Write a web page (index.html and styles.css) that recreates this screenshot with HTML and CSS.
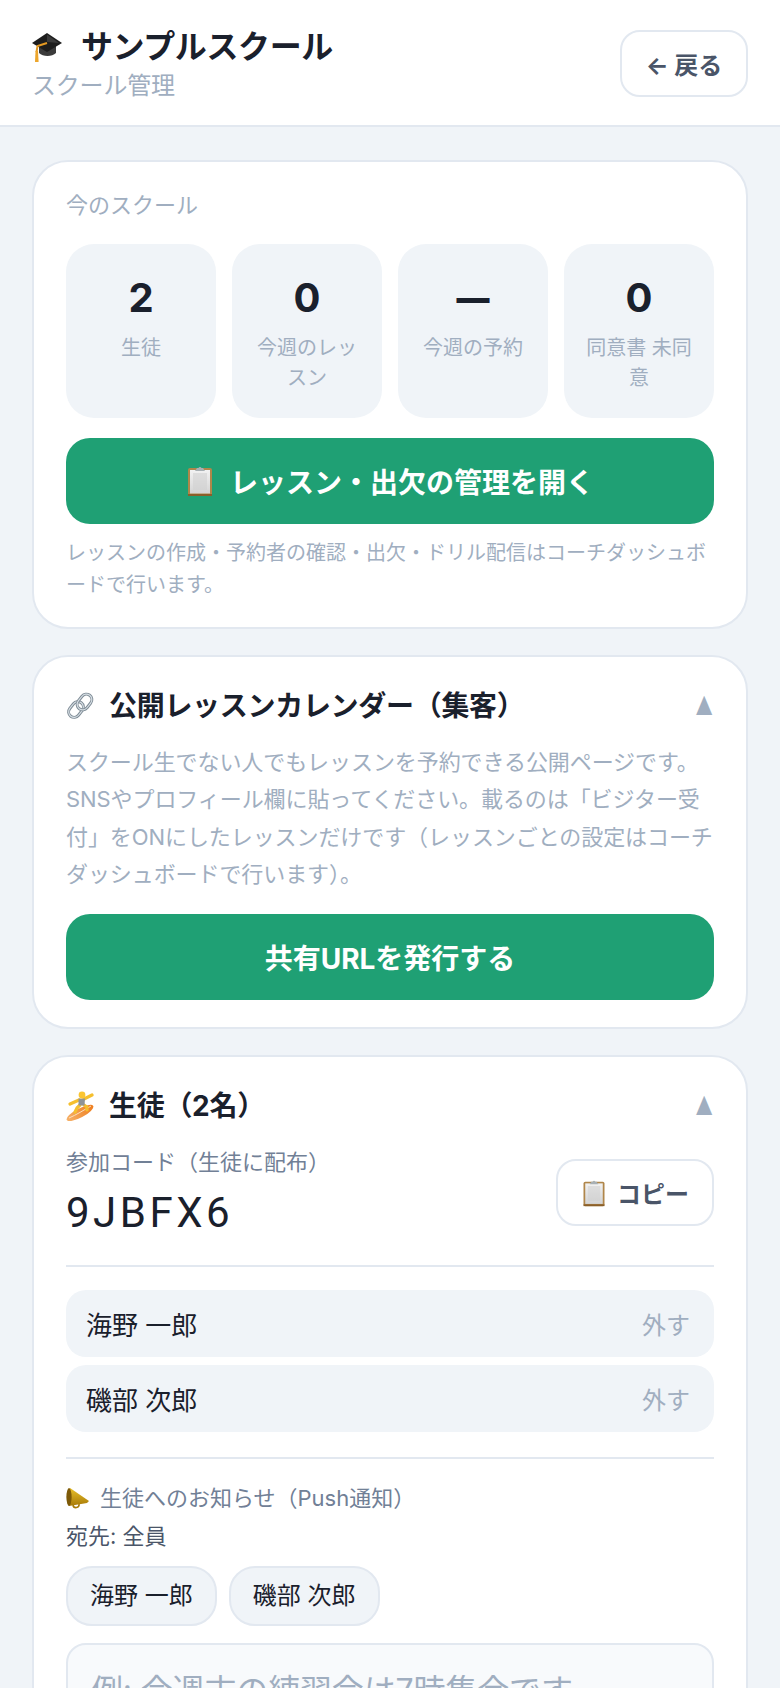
FILE: index.html
```html
<!DOCTYPE html>
<html lang="ja">
<head>
<meta charset="UTF-8">
<meta name="viewport" content="width=device-width, initial-scale=1.0">
<title>サンプルスクール</title>
<link rel="stylesheet" href="styles.css">
</head>
<body>

<svg class="defs" width="0" height="0" aria-hidden="true">
  <defs>
    <linearGradient id="paperGrad" x1="0" y1="0" x2="0" y2="1">
      <stop offset="0" stop-color="#f2f2f2"/>
      <stop offset="1" stop-color="#d4d4d4"/>
    </linearGradient>
    <linearGradient id="goldGrad" x1="0" y1="0" x2="0" y2="1">
      <stop offset="0" stop-color="#e8c02a"/>
      <stop offset="1" stop-color="#a87a08"/>
    </linearGradient>
    <linearGradient id="boardGrad" x1="0" y1="0" x2="1" y2="0">
      <stop offset="0" stop-color="#f6b26a"/>
      <stop offset="1" stop-color="#ee7d1e"/>
    </linearGradient>
    <symbol id="iconClipboard" viewBox="0 0 28 32">
      <rect x="2" y="3" width="24" height="28" rx="2" fill="#b0864a"/>
      <rect x="2" y="29" width="24" height="2" fill="#8a5f2a"/>
      <rect x="4" y="5" width="20" height="23.5" fill="url(#paperGrad)"/>
      <rect x="7" y="8" width="14" height="17" fill="#cfcfcf" opacity=".55"/>
      <path d="M9 6 L11 3 H12.5 A1.6 1.6 0 0 1 15.5 3 H17 L19 6 Z" fill="#a8b0b4"/>
    </symbol>
  </defs>
</svg>

<header class="topbar">
  <div class="topbar-left">
    <h1 class="school-name">
      <svg class="icon-cap" viewBox="0 0 30 30" aria-hidden="true">
        <path d="M7 12 V21 C11 25 20 25 24 21 V12 Z" fill="#3b3b3b"/>
        <path d="M15 1 L30 11 L15 20 L0 11 Z" fill="#1d1d1d"/>
        <path d="M15 2.5 L27 11 L15 10 Z" fill="#3a3a3a"/>
        <path d="M15 11 L5.5 14 L4.5 20" fill="none" stroke="#e59a22" stroke-width="2"/>
        <path d="M3.5 19 H6 L6.6 30 H3 Z" fill="#eda62c"/>
      </svg>
      サンプルスクール
    </h1>
    <p class="school-sub">スクール管理</p>
  </div>
  <button type="button" class="btn-outline btn-back">← 戻る</button>
</header>

<main class="page">

  <section class="card">
    <p class="card-label">今のスクール</p>
    <div class="stats">
      <div class="stat"><div class="stat-num">2</div><div class="stat-label">生徒</div></div>
      <div class="stat"><div class="stat-num">0</div><div class="stat-label">今週のレッスン</div></div>
      <div class="stat"><div class="stat-num stat-dash">—</div><div class="stat-label">今週の予約</div></div>
      <div class="stat"><div class="stat-num">0</div><div class="stat-label">同意書 未同意</div></div>
    </div>
    <button type="button" class="btn-green">
      <svg class="icon-clip-lg"><use href="#iconClipboard"/></svg>
      レッスン・出欠の管理を開く
    </button>
    <p class="note">レッスンの作成・予約者の確認・出欠・ドリル配信はコーチダッシュボードで行います。</p>
  </section>

  <section class="card">
    <div class="section-head">
      <h2 class="section-title">
        <svg class="icon-head" viewBox="0 0 28 28" aria-hidden="true">
          <g fill="none" stroke-linecap="round">
            <rect x="1.5" y="12" width="17" height="11" rx="5.5" transform="rotate(-52 10 17.5)" stroke="#7d8a94" stroke-width="3"/>
            <rect x="1.5" y="12" width="17" height="11" rx="5.5" transform="rotate(-52 10 17.5)" stroke="#d7dfe5" stroke-width="1.2"/>
            <rect x="10" y="4.5" width="17" height="11" rx="5.5" transform="rotate(-52 18.5 10)" stroke="#7d8a94" stroke-width="3"/>
            <rect x="10" y="4.5" width="17" height="11" rx="5.5" transform="rotate(-52 18.5 10)" stroke="#d7dfe5" stroke-width="1.2"/>
          </g>
        </svg>
        公開レッスンカレンダー（集客）
      </h2>
      <span class="caret">▲</span>
    </div>
    <p class="desc">スクール生でない人でもレッスンを予約できる公開ページです。SNSやプロフィール欄に貼ってください。載るのは「ビジター受付」をONにしたレッスンだけです（レッスンごとの設定はコーチダッシュボードで行います）。</p>
    <button type="button" class="btn-green">共有URLを発行する</button>
  </section>

  <section class="card">
    <div class="section-head">
      <h2 class="section-title">
        <svg class="icon-head icon-surfer" viewBox="0 0 28 30" aria-hidden="true">
          <ellipse cx="14" cy="22" rx="15" ry="4.6" transform="rotate(-28 14 22)" fill="url(#boardGrad)"/>
          <path d="M3 27 C10 24 18 19 25 15" fill="none" stroke="#fbe0bd" stroke-width="1"/>
          <g fill="none" stroke="#f5bf2e" stroke-width="3.2" stroke-linecap="round" stroke-linejoin="round">
            <path d="M13 9 L4 13"/>
            <path d="M18 8 L26 4"/>
            <path d="M14 14 L11 17 L9 21"/>
            <path d="M18 14 L21 16 L21 19"/>
          </g>
          <path d="M12.5 7.5 H19 L18.5 14.5 H12.5 Z" fill="#8f9497"/>
          <circle cx="16" cy="4" r="3.4" fill="#fbc531"/>
        </svg>
        生徒（2名）
      </h2>
      <span class="caret">▲</span>
    </div>

    <div class="code-row">
      <div>
        <div class="code-label">参加コード（生徒に配布）</div>
        <div class="code-value">9JBFX6</div>
      </div>
      <button type="button" class="btn-outline btn-copy">
        <svg class="icon-clip-sm"><use href="#iconClipboard"/></svg>
        コピー
      </button>
    </div>

    <hr class="rule">

    <ul class="students">
      <li class="student"><span>海野 一郎</span><span class="remove">外す</span></li>
      <li class="student"><span>磯部 次郎</span><span class="remove">外す</span></li>
    </ul>

    <hr class="rule rule-low">

    <div class="notice-title">
      <svg class="icon-horn" viewBox="0 0 24 24" aria-hidden="true">
        <path d="M4 2 L23 15 L21 17 L3 20 C0 14 0 6 4 2 Z" fill="url(#goldGrad)"/>
        <ellipse cx="3" cy="11" rx="2.6" ry="9" fill="#7d5a08"/>
        <path d="M7 19 A3 3 0 0 0 13 18" fill="none" stroke="#a87a08" stroke-width="1.6"/>
      </svg>
      生徒へのお知らせ（Push通知）
    </div>
    <div class="notice-to">宛先: 全員</div>
    <div class="chips">
      <span class="chip">海野 一郎</span>
      <span class="chip">磯部 次郎</span>
    </div>
    <textarea class="notice-input" rows="4" placeholder="例: 今週末の練習会は7時集合です"></textarea>
  </section>

</main>
</body>
</html>
```

FILE: styles.css
```css
html, body {
  height: 100%;
  overflow: hidden;
}

body {
  margin: 0;
  font-family: Inter, "Noto Sans CJK JP", sans-serif;
  background-color: #f0f4f8;
  color: #1a202c;
}

.defs {
  position: absolute;
}

h1, h2, p, ul {
  margin: 0;
  padding: 0;
}

/* header */
.topbar {
  display: flex;
  justify-content: space-between;
  align-items: center;
  height: 125px;
  padding: 0 32px;
  background-color: #fff;
  border-bottom: 2px solid #e2e8f0;
}

.topbar-left {
  padding-top: 5px;
}

.school-name {
  display: flex;
  align-items: center;
  gap: 19px;
  font-size: 32px;
  line-height: 40px;
  font-weight: 700;
  letter-spacing: -0.4px;
}

.icon-cap {
  width: 30px;
  height: 30px;
}

.school-sub {
  margin-top: 1px;
  font-size: 24px;
  line-height: 36px;
  color: #a0aec0;
  letter-spacing: -0.2px;
}

.btn-outline {
  display: flex;
  align-items: center;
  justify-content: center;
  height: 67px;
  background-color: #fff;
  border: 2px solid #e2e8f0;
  border-radius: 20px;
  color: #4a5568;
  font-family: inherit;
  font-size: 24px;
  font-weight: 700;
}

.btn-back {
  width: 128px;
  margin-top: 2px;
}

/* cards */
.page {
  display: flex;
  flex-direction: column;
  gap: 26px;
  padding: 33px 32px 32px;
}

.card {
  padding: 28px 32px 26px;
  background-color: #fff;
  border: 2px solid #e2e8f0;
  border-radius: 36px;
}

.card-label {
  margin-top: -1px;
  font-size: 22px;
  line-height: 33px;
  color: #a0aec0;
}

.stats {
  display: grid;
  grid-template-columns: repeat(4, 1fr);
  gap: 16px;
  margin-top: 22px;
}

.stat {
  height: 174px;
  box-sizing: border-box;
  padding: 24px 16px;
  background-color: #f0f4f8;
  border-radius: 28px;
  text-align: center;
}

.stat-num {
  font-size: 40px;
  line-height: 60px;
  font-weight: 700;
}

.stat-dash {
  font-size: 33px;
  font-weight: 900;
}

.stat-label {
  margin-top: 5px;
  font-size: 20px;
  line-height: 30px;
  color: #a0aec0;
}

.btn-green {
  display: flex;
  align-items: center;
  justify-content: center;
  gap: 16px;
  width: 100%;
  height: 86px;
  margin-top: 20px;
  background-color: #1fa074;
  border: none;
  border-radius: 24px;
  color: #fff;
  font-family: inherit;
  font-size: 28px;
  font-weight: 700;
}

.icon-clip-lg {
  width: 28px;
  height: 32px;
}

.note {
  margin-top: 13px;
  font-size: 20px;
  line-height: 32px;
  color: #a0aec0;
}

.section-head {
  display: flex;
  justify-content: space-between;
  align-items: center;
}

.section-title {
  display: flex;
  align-items: center;
  gap: 15px;
  font-size: 28px;
  line-height: 42px;
  font-weight: 700;
  letter-spacing: -0.3px;
}

.icon-head {
  width: 28px;
  height: 28px;
}

.icon-surfer {
  height: 30px;
}

.caret {
  display: inline-block;
  font-size: 20px;
  color: #a0aec0;
  transform: scale(0.88, 1.25);
}

.desc {
  margin-top: 17px;
  font-size: 22px;
  line-height: 37.4px;
  color: #a0aec0;
  letter-spacing: -0.08px;
}

.desc + .btn-green {
  margin-bottom: 1px;
}

/* students */
.code-row {
  display: flex;
  justify-content: space-between;
  align-items: center;
  margin-top: 18px;
}

.code-label {
  font-size: 22px;
  line-height: 34px;
  color: #718096;
}

.code-value {
  margin-top: 6px;
  font-family: Roboto, sans-serif;
  font-size: 42px;
  line-height: 56px;
  font-weight: 400;
  letter-spacing: 3.5px;
}

.btn-copy {
  gap: 10px;
  width: 158px;
}

.icon-clip-sm {
  width: 26px;
  height: 28px;
}

.rule {
  height: 2px;
  margin: 24px 0 23px;
  background-color: #e2e8f0;
  border: none;
}

.students {
  display: flex;
  flex-direction: column;
  gap: 8px;
  list-style: none;
}

.student {
  display: flex;
  justify-content: space-between;
  align-items: center;
  height: 67px;
  padding: 0 24px 0 20px;
  background-color: #f0f4f8;
  border-radius: 20px;
  font-size: 26px;
}

.remove {
  font-size: 24px;
  color: #a0aec0;
}

.rule-low {
  margin: 25px 0 23px;
}

.notice-title {
  display: flex;
  align-items: center;
  gap: 10px;
  font-size: 22px;
  line-height: 33px;
  color: #718096;
}

.icon-horn {
  width: 24px;
  height: 24px;
}

.notice-to {
  margin-top: 5px;
  font-size: 22px;
  line-height: 33px;
  color: #4a5568;
}

.chips {
  display: flex;
  gap: 12px;
  margin-top: 13px;
}

.chip {
  padding: 0 22px;
  line-height: 56px;
  background-color: #f0f4f8;
  border: 2px solid #e2e8f0;
  border-radius: 26px;
  font-size: 24px;
}

.notice-input {
  display: block;
  box-sizing: border-box;
  width: 100%;
  margin-top: 17px;
  padding: 20px 23px;
  background-color: #f8fafc;
  border: 2px solid #e2e8f0;
  border-radius: 20px;
  font-family: inherit;
  font-size: 32px;
  letter-spacing: -0.15px;
  color: #1a202c;
  resize: none;
}

.notice-input::placeholder {
  color: #a0aec0;
}
```
